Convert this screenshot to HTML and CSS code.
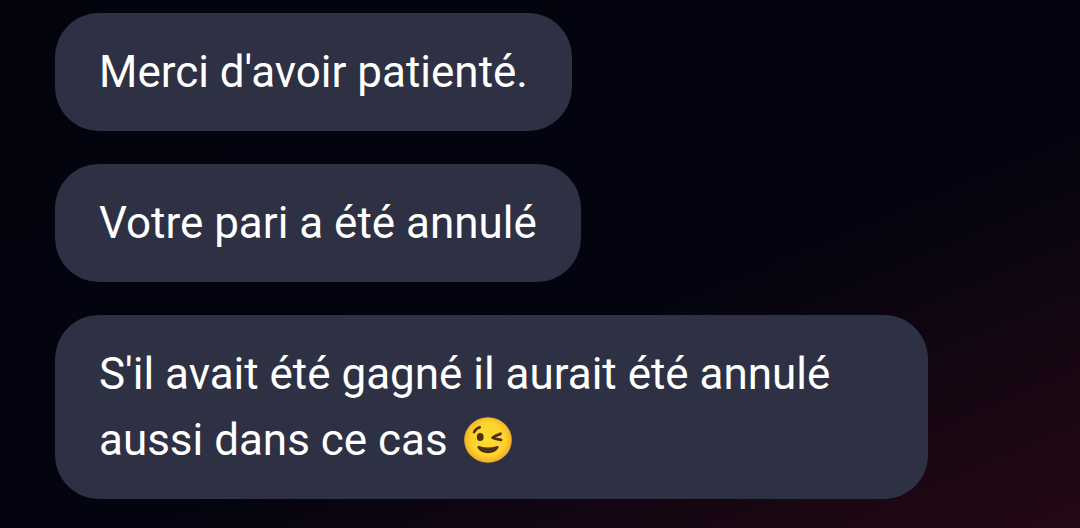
FILE: index.html
```html
<!DOCTYPE html>
<html lang="fr">
<head>
    <meta charset="utf-8">
    <title>Chat</title>
    <link rel="stylesheet" href="styles.css">
</head>
<body>
<div class="chat">
    <div class="message">Merci d'avoir patienté.</div>
    <div class="message">Votre pari a été annulé</div>
    <div class="message">
        S'il avait été gagné il aurait été annulé<br>
        aussi dans ce cas
        <svg class="emoji" viewBox="0 0 50 50" role="img" aria-label="Clin d'œil">
            <defs>
                <radialGradient id="face" cx="50%" cy="48%" r="53%">
                    <stop offset="0%" stop-color="#fedb30"/>
                    <stop offset="70%" stop-color="#fdd22c"/>
                    <stop offset="100%" stop-color="#f0a626"/>
                </radialGradient>
            </defs>
            <ellipse cx="25" cy="25" rx="23.8" ry="22.8" fill="url(#face)"/>
            <path d="M11 17.2 Q13 13.2 16.8 12.2" fill="none" stroke="#4a3011" stroke-width="2.5" stroke-linecap="round"/>
            <ellipse cx="17.2" cy="22" rx="3.4" ry="3.9" fill="#4a3011"/>
            <path d="M37.5 18.8 Q32 20.6 29.6 22.7 Q33 24.2 38 24.8" fill="none" stroke="#4a3011" stroke-width="2.8" stroke-linecap="round" stroke-linejoin="round"/>
            <path d="M16 31 Q25 34 34 31 Q36.2 30.6 35.5 32.8 Q32.5 38.2 25 38.2 Q17.5 38.2 14.5 32.8 Q13.8 30.6 16 31 Z" fill="#4a3011"/>
        </svg>
    </div>
</div>
</body>
</html>
```

FILE: styles.css
```css
html, body {
    margin: 0;
    height: 100%;
    overflow: hidden;
}
body {
    background: linear-gradient(157deg, #02030d 0%, #03040f 60%, #120612 76%, #240815 100%);
    font-family: Roboto, sans-serif;
}
.chat {
    display: flex;
    flex-direction: column;
    align-items: flex-start;
    gap: 33px;
    padding: 13px 0 0 55px;
}
.message {
    box-sizing: border-box;
    max-width: 873px;
    padding: 26px 44px;
    border-radius: 44px;
    background: #2e3144;
    color: #fff;
    font-size: 43.97px;
    line-height: 66px;
}
.message:last-child {
    width: 873px;
}
.emoji {
    width: 50px;
    height: 50px;
    margin-left: 4px;
    vertical-align: -10px;
}
```
